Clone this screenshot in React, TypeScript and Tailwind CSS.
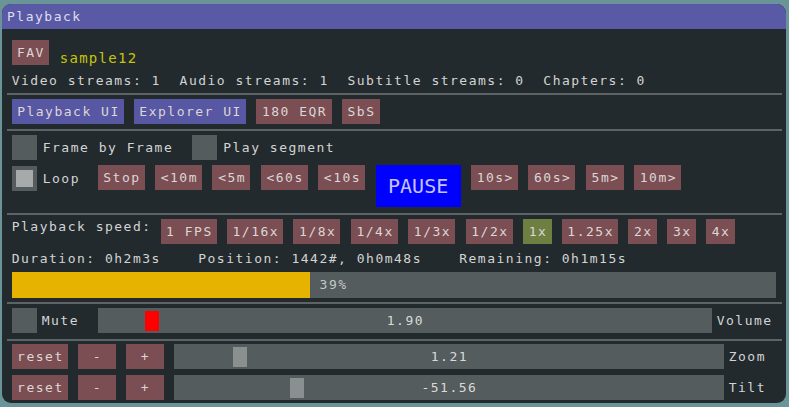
import type { ReactNode } from 'react';

const mono = "font-['DejaVu_Sans_Mono','Liberation_Mono',monospace] text-[13px] leading-[18px] tracking-[1.5px]";

function Btn({ w, children, tone = 'red' }: { w: string; children: ReactNode; tone?: 'red' | 'blue' | 'green' }) {
  const bg = tone === 'blue' ? 'bg-[#5757a3]' : tone === 'green' ? 'bg-[#6d8042]' : 'bg-[#7a4e52]';
  return (
    <div className={`${w} ${bg} h-[25px] shrink-0 flex items-center justify-center pl-[1.5px] text-[#ddd6d6]`}>
      {children}
    </div>
  );
}

function Check({ checked = false }: { checked?: boolean }) {
  return (
    <div className="w-[25px] h-[25px] shrink-0 bg-[#555c5d] p-[4px]">
      {checked && <div className="w-full h-full bg-[#a6aaaa]" />}
    </div>
  );
}

function Slider({ w, value, grabLeft, grab }: { w: string; value: string; grabLeft: number; grab: string }) {
  return (
    <div className={`${w} relative h-[25px] shrink-0 bg-[#555c5d] flex items-center justify-center text-[#d8dada]`}>
      {/* grab */}
      <div className={`absolute top-[3px] w-[14px] h-[20px] ${grab}`} style={{ left: grabLeft }} />
      <span className="relative pl-[1.5px]">{value}</span>
    </div>
  );
}

function Sep() {
  return <div className="h-[2px] bg-[#5e6465] ml-[-4.7px] mr-[-6px]" />;
}

export default function App() {
  return (
    <div className={`w-[789px] h-[407px] bg-[#6b9499] pt-[4px] pl-[2px] ${mono}`}>
      <div className="w-[784px] h-[399px] rounded-[9px] overflow-hidden bg-[#232a2d] flex flex-col">
        {/* Title bar */}
        <div className="h-[25px] bg-[#5959a5] flex items-center pl-[5px] text-[#dedef0]">Playback</div>

        <div className="pl-[9.7px] pr-[10.4px] pt-[11px] flex flex-col text-[#d2d4d4]">
          <div className="flex h-[25px] items-start">
            <Btn w="w-[37px]">FAV</Btn>
            <span className="ml-[11px] mt-[9px] text-[14px] tracking-[1.3px] text-[#c6c40c]">sample12</span>
          </div>

          <div className="mt-[7px] h-[18px] whitespace-pre">
            Video streams: 1  Audio streams: 1  Subtitle streams: 0  Chapters: 0
          </div>

          <div className="mt-[3px]"><Sep /></div>

          <div className="mt-[4px] flex gap-[10.2px]">
            <Btn w="w-[112px]" tone="blue">Playback UI</Btn>
            <Btn w="w-[112px]" tone="blue">Explorer UI</Btn>
            <Btn w="w-[75.5px]">180 EQR</Btn>
            <Btn w="w-[38px]">SbS</Btn>
          </div>

          <div className="mt-[5px]"><Sep /></div>

          <div className="mt-[4px] flex items-center h-[25px]">
            <Check />
            <span className="ml-[6px] w-[149.5px]">Frame by Frame</span>
            <Check />
            <span className="ml-[6px]">Play segment</span>
          </div>

          <div className="mt-[5px] flex items-start h-[42px]">
            <div className="flex items-center h-[25px] mt-[1px]">
              <Check checked />
              <span className="ml-[6px] w-[55px]">Loop</span>
            </div>
            <div className="flex items-start gap-[10.4px]">
              <Btn w="w-[47px]">Stop</Btn>
              <Btn w="w-[47px]">&lt;10m</Btn>
              <Btn w="w-[38px]">&lt;5m</Btn>
              <Btn w="w-[47px]">&lt;60s</Btn>
              <Btn w="w-[47px]">&lt;10s</Btn>
              <div className="w-[85px] h-[42px] bg-[#0000ff] flex items-center justify-center text-[20px] tracking-[0px] text-[#c4c4ff]">
                PAUSE
              </div>
              <Btn w="w-[47px]">10s&gt;</Btn>
              <Btn w="w-[47px]">60s&gt;</Btn>
              <Btn w="w-[38px]">5m&gt;</Btn>
              <Btn w="w-[47px]">10m&gt;</Btn>
            </div>
          </div>

          <div className="mt-[5.5px]"><Sep /></div>

          <div className="mt-[4.5px] flex items-start h-[25px]">
            <span className="w-[149px] mt-[-1px]">Playback speed:</span>
            <div className="flex gap-[10.4px]">
              <Btn w="w-[56px]">1 FPS</Btn>
              <Btn w="w-[56px]">1/16x</Btn>
              <Btn w="w-[47px]">1/8x</Btn>
              <Btn w="w-[47px]">1/4x</Btn>
              <Btn w="w-[47px]">1/3x</Btn>
              <Btn w="w-[47px]">1/2x</Btn>
              <Btn w="w-[28.5px]" tone="green">1x</Btn>
              <Btn w="w-[56px]">1.25x</Btn>
              <Btn w="w-[28.5px]">2x</Btn>
              <Btn w="w-[28.5px]">3x</Btn>
              <Btn w="w-[28.5px]">4x</Btn>
            </div>
          </div>

          <div className="mt-[5.5px] h-[18px] flex whitespace-pre">
            <span className="w-[186.5px]">Duration: 0h2m3s</span>
            <span className="w-[261px]">Position: 1442#, 0h0m48s</span>
            <span>Remaining: 0h1m15s</span>
          </div>

          <div className="mt-[4.5px] h-[25.5px] bg-[#555c5d] flex items-center">
            <div className="w-[39%] h-full bg-[#e6b400]" />
            <span className="ml-[10px] text-[#c4c8c8]">39%</span>
          </div>

          <div className="mt-[4.5px]"><Sep /></div>

          <div className="mt-[4px] flex items-center h-[25px]">
            <Check />
            <span className="ml-[5px] w-[56px]">Mute</span>
            <Slider w="w-[614px]" value="1.90" grabLeft={47.5} grab="bg-[#ff0000]" />
            <span className="ml-[5px]">Volume</span>
          </div>

          <div className="mt-[5.5px]"><Sep /></div>

          <div className="mt-[3.5px] flex items-center h-[25px] gap-[10px]">
            <Btn w="w-[56px]">reset</Btn>
            <Btn w="w-[38px]">-</Btn>
            <Btn w="w-[38px]">+</Btn>
            <Slider w="w-[550px]" value="1.21" grabLeft={59} grab="bg-[#8a8f90]" />
            <span className="ml-[-5px]">Zoom</span>
          </div>

          <div className="mt-[6px] flex items-center h-[25px] gap-[10px]">
            <Btn w="w-[56px]">reset</Btn>
            <Btn w="w-[38px]">-</Btn>
            <Btn w="w-[38px]">+</Btn>
            <Slider w="w-[550px]" value="-51.56" grabLeft={116} grab="bg-[#8a8f90]" />
            <span className="ml-[-5px]">Tilt</span>
          </div>
        </div>
      </div>
    </div>
  );
}
